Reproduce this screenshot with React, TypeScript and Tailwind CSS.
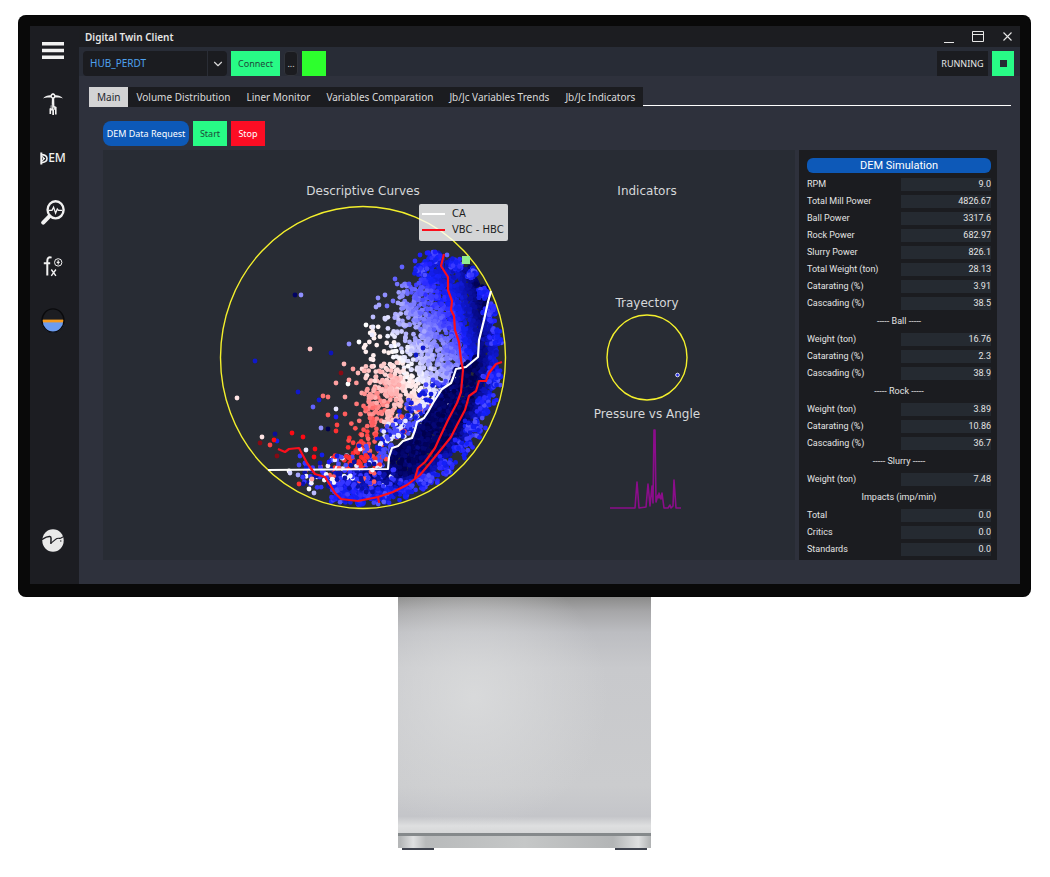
import { useMemo, useState } from 'react';
import type { ReactNode } from 'react';
import { ChevronDown } from 'lucide-react';

type Dot = { x: number; y: number; r: number; fill: string };
type Point = [number, number];
type Row = { label: string; value?: string };

const tabs = [
  'Main',
  'Volume Distribution',
  'Liner Monitor',
  'Variables Comparation',
  'Jb/Jc Variables Trends',
  'Jb/Jc Indicators',
];

// Rows without a value are section titles
const simulationRows: Row[] = [
  { label: 'RPM', value: '9.0' },
  { label: 'Total Mill Power', value: '4826.67' },
  { label: 'Ball Power', value: '3317.6' },
  { label: 'Rock Power', value: '682.97' },
  { label: 'Slurry Power', value: '826.1' },
  { label: 'Total Weight (ton)', value: '28.13' },
  { label: 'Catarating (%)', value: '3.91' },
  { label: 'Cascading (%)', value: '38.5' },
  { label: '----- Ball -----' },
  { label: 'Weight (ton)', value: '16.76' },
  { label: 'Catarating (%)', value: '2.3' },
  { label: 'Cascading (%)', value: '38.9' },
  { label: '----- Rock -----' },
  { label: 'Weight (ton)', value: '3.89' },
  { label: 'Catarating (%)', value: '10.86' },
  { label: 'Cascading (%)', value: '36.7' },
  { label: '----- Slurry -----' },
  { label: 'Weight (ton)', value: '7.48' },
  { label: 'Impacts (imp/min)' },
  { label: 'Total', value: '0.0' },
  { label: 'Critics', value: '0.0' },
  { label: 'Standards', value: '0.0' },
];

const CA_LINE =
  '491,291 488,302 484,320 479,340 478,357 466,367 456,369 453,378 451,383 442,389 433,403 428,412 424,418 417,422 415,430 412,438 403,441 398,446 392,448 389,457 388,469 268,470';
const VBC_LINE =
  '444,254 441,266 448,277 448,290 452,301 451,310 454,316 455,330 459,342 461,360 463,370 461,392 457,403 448,420 440,437 435,448 425,462 418,468 415,478';
const HBC_LINE =
  '502,362 496,364 489,373 486,381 479,381 476,391 469,396 465,410 457,425 451,437 443,447 430,463 420,475 407,485 393,492 378,497 379,502 378,497 358,501 341,499 335,493 325,477 315,474 307,463 299,448 289,449 285,452 278,449';
const PRESSURE_LINE =
  '610,508 635,508 637,482 639,508 646,507 648,484 650,506 652,486 653,503 654,430 655,430 656,502 658,495 659,498 659,493 661,499 662,493 664,508 668,508 670,505 671,508 673,506 674,480 676,508 681,508';

const bulkShape: Point[] = [
  [491, 291], [484, 320], [478, 355], [455, 369], [450, 384], [433, 403], [423, 419], [412, 439],
  [392, 449], [388, 469], [335, 473], [328, 482], [338, 497], [362, 502], [395, 495], [430, 474],
  [455, 450], [478, 420], [494, 388], [500, 350], [496, 318],
];
const fanShape: Point[] = [
  [427, 258], [437, 250], [445, 262], [455, 257], [463, 268], [473, 267], [478, 285], [490, 289],
  [487, 318], [479, 356], [455, 372], [443, 392], [425, 410], [405, 415], [394, 400], [378, 386],
  [366, 356], [362, 340], [372, 325], [384, 318], [398, 304], [394, 284], [404, 278], [414, 288],
  [417, 264],
];
// Lumps of balls carried up by the lifters
const lumps: Point[] = [
  [435, 257], [421, 270], [455, 264], [471, 274], [484, 293], [493, 312], [498, 338], [494, 378],
  [487, 405], [475, 427], [464, 449], [447, 467], [427, 480], [405, 491], [383, 497], [360, 499],
  [340, 495],
];
// [x, y, charge], from -1.5 (dark red) over 0 (white) to 2 (navy)
const strays: [number, number, number][] = [
  [295, 295, 1.9], [301, 295, 0.5], [310, 349, -0.25], [331, 353, 1.4], [349, 344, 0.5], [255, 361, 1.3],
  [237, 398, -0.1], [298, 392, 1.3], [313, 407, 0.7], [319, 400, 1.2], [323, 396, -0.6], [328, 397, -0.6],
  [344, 364, -0.3], [353, 369, -0.4], [358, 373, -0.3], [341, 373, -1.5], [336, 383, -0.4], [348, 384, 0],
  [349, 380, -0.4], [345, 397, -0.4], [336, 409, 0.1], [336, 417, 1], [328, 415, -0.7], [345, 414, -0.7],
  [321, 428, 0.5], [328, 429, 2], [337, 425, -0.8], [336, 431, -0.9], [262, 437, -0.1], [260, 443, -1.5],
  [270, 445, -0.8], [275, 434, 1.6], [277, 441, 1.1], [274, 440, -1], [292, 433, -1], [303, 437, -1],
  [277, 456, -1.5], [306, 450, 0.1], [315, 449, -1], [314, 457, -1], [322, 455, 1.1], [300, 456, 0.9],
  [315, 498, -0.1], [289, 471, 0], [290, 473, 0.2], [298, 475, 0.4], [299, 484, -0.9], [309, 489, 0],
  [314, 493, 0.3], [299, 465, 0.8], [306, 468, 1.3], [312, 479, -0.4], [320, 463, 1.4], [329, 462, 1],
  [337, 456, 1.2], [427, 253, 1], [420, 255, 1], [435, 252, 1], [402, 267, 0.7], [447, 255, 0.7],
  [415, 261, 0.9], [385, 295, 0.5], [378, 298, 0.5], [379, 305, 0.4], [376, 307, 0.4], [387, 306, 0.6],
  [393, 301, 0.6], [373, 317, 0.3], [366, 325, 0], [373, 327, 0.1], [359, 342, 0], [372, 335, 0.1],
  [395, 279, 0.7], [416, 355, 1.3], [423, 348, 1.3], [409, 284, 0.8], [430, 264, 1],
];

function createRandom(seed: number) {
  let s = seed;
  return () => {
    s = (s * 16807) % 2147483647;
    return s / 2147483647;
  };
}

function isInside(x: number, y: number, shape: Point[]) {
  let inside = false;
  for (let i = 0, j = shape.length - 1; i < shape.length; j = i++) {
    const [xi, yi] = shape[i];
    const [xj, yj] = shape[j];
    if (yi > y !== yj > y && x < ((xj - xi) * (y - yi)) / (yj - yi) + xi) inside = !inside;
  }
  return inside;
}

function shellRatio(x: number, y: number) {
  return Math.hypot((x - 363) / 142.5, (y - 357.5) / 151);
}

function chargeColor(c: number) {
  if (c > 1) {
    const k = Math.min(c - 1, 1);
    return `rgb(${Math.round(22 - 22 * k)},${Math.round(34 - 34 * k)},${Math.round(255 - 175 * k)})`;
  }
  if (c >= 0) {
    const v = Math.round(255 - 225 * c);
    return `rgb(${v},${v},255)`;
  }
  if (c > -1) {
    const v = Math.round(250 + 225 * c);
    return `rgb(255,${v},${v})`;
  }
  return `rgb(${Math.round(255 - Math.min(-c - 1, 0.5) * 240)},10,20)`;
}

function buildDots() {
  const rand = createRandom(4242);
  const dots: Dot[] = [];
  const add = (x: number, y: number, c: number) => {
    if (shellRatio(x, y) < 0.98) dots.push({ x, y, r: 2.4, fill: chargeColor(c) });
  };
  const spread = (n: number) => (rand() + rand() - 1) * n;

  // Falling fan, sparse on its left side
  for (let i = 0; i < 4600; i++) {
    const x = 355 + rand() * 140;
    const y = 248 + rand() * 168;
    if (!isInside(x, y, fanShape)) continue;
    const density = Math.min(1, Math.max(0.1, (x - 378) / 75));
    if (rand() > density) continue;
    let c = 0.7 + (x - 440) * 0.011 + (330 - y) * 0.008 + spread(0.14);
    if (x > 460) c += (x - 460) * 0.024;
    const floor = -0.05 - Math.max(0, y - 362) * 0.009;
    add(x, y, Math.max(floor, c));
  }

  // Pink to red column below the fan
  for (let i = 0; i < 165; i++) {
    const t = rand();
    const x = 382 - t * 22 + spread(23);
    const y = 365 + t * 95 + spread(10);
    add(x, y, -0.15 - t * 0.8 + spread(0.15));
  }
  for (let i = 0; i < 60; i++) {
    add(392 + spread(12), 375 + rand() * 48, -0.28 + spread(0.1));
  }

  // Mixed charge rolling down to the toe
  for (let i = 0; i < 230; i++) {
    const t = rand();
    const x = 445 - t * 72 + spread(17);
    const y = 385 + t * 74 + spread(15);
    const pick = rand();
    add(x, y, pick < 0.25 ? 0.1 : pick < 0.65 ? 0.8 : pick < 0.95 ? 1.2 : -0.8);
  }
  for (let i = 0; i < 85; i++) {
    const pick = rand();
    add(330 + rand() * 53, 455 + rand() * 16, pick < 0.35 ? -0.9 : pick < 0.65 ? 0.8 : pick < 0.8 ? 0.1 : 1.5);
  }

  // Dense cascading bulk, navy in the middle and brighter at the shell
  for (let i = 0; i < 8500; i++) {
    const x = 328 + rand() * 174;
    const y = 290 + rand() * 214;
    if (!isInside(x, y, bulkShape)) continue;
    const rho = shellRatio(x, y);
    if (rho > 0.94) continue;
    const shell = Math.max(0, (rho - 0.8) / 0.14);
    const toe = x < 395 ? (395 - x) / 55 : 0;
    add(x, y, Math.max(1, 1.9 - shell * 0.75 - toe * 0.5 + spread(0.25)));
  }

  // Lumps along the shell
  lumps.forEach(([cx, cy], index) => {
    const size = index < 5 ? 7 : 12;
    for (let i = 0; i < 42; i++) {
      add(cx + spread(size), cy + spread(size), 0.98 + spread(0.28));
    }
  });

  // Toe of the charge
  for (let i = 0; i < 130; i++) {
    const t = rand();
    const pick = rand();
    add(302 + t * 95, 476 + t * 6 + spread(15), pick < 0.14 ? 0.05 : pick < 0.22 ? -0.7 : pick < 0.7 ? 0.9 : 1.5);
  }

  strays.forEach(([x, y, c]) => add(x, y, c));
  return dots;
}

function DescriptiveCurves() {
  const dots = useMemo(buildDots, []);

  return (
    <figure className="relative w-[300px] shrink-0">
      <figcaption className="text-center text-xs leading-5 text-[#d6d8da] mb-0.5">Descriptive Curves</figcaption>
      <svg viewBox="213 203 300 310" className="block w-full" role="img" aria-label="Descriptive Curves">
        {dots.map((dot, i) => (
          <circle key={i} cx={dot.x} cy={dot.y} r={dot.r} fill={dot.fill} />
        ))}
        <ellipse cx="363" cy="357.5" rx="142.5" ry="151" fill="none" stroke="#f4f02c" strokeWidth="1.4" />
        <polyline points={CA_LINE} fill="none" stroke="#fff" strokeWidth="2.2" strokeLinejoin="round" />
        <polyline points={VBC_LINE} fill="none" stroke="#fb0f1c" strokeWidth="2.2" strokeLinejoin="round" />
        <polyline points={HBC_LINE} fill="none" stroke="#fb0f1c" strokeWidth="2.2" strokeLinejoin="round" />
        <rect x="462" y="256" width="8" height="8" fill="#90ee90" />
      </svg>
      <ul className="absolute right-[5px] top-[23px] w-[89px] h-[37px] rounded-xs bg-white/80 px-[3px] py-0.5 text-[10px] leading-4 text-[#1d1d1d]">
        <li className="flex items-center">
          <span className="w-[23px] h-0.5 mr-[7px] bg-white" />CA
        </li>
        <li className="flex items-center whitespace-nowrap">
          <span className="w-[23px] h-0.5 mr-[7px] bg-[#fb0f1c]" />VBC - HBC
        </li>
      </ul>
    </figure>
  );
}

function Indicators() {
  return (
    <div className="w-[120px] shrink-0 text-center text-xs leading-5 text-[#d6d8da]">
      <h2 className="mb-[92px]">Indicators</h2>
      <h3>Trayectory</h3>
      <svg viewBox="602 313 90 90" className="mx-auto block w-[90px]" role="img" aria-label="Trayectory">
        <ellipse cx="647" cy="357.5" rx="40" ry="42.5" fill="none" stroke="#f4f02c" strokeWidth="1.4" />
        <circle cx="677.5" cy="375" r="1.8" fill="#1c28e8" stroke="#e8e8ff" strokeWidth="1" />
      </svg>
      <h3 className="mt-px mb-1 whitespace-nowrap">Pressure vs Angle</h3>
      <svg viewBox="607 428 80 84" className="mx-auto block w-20" role="img" aria-label="Pressure vs Angle">
        <polyline points={PRESSURE_LINE} fill="none" stroke="#8b0d8b" strokeWidth="1.6" strokeLinejoin="round" />
      </svg>
    </div>
  );
}

function SimulationPanel() {
  return (
    <aside className="w-[198px] shrink-0 bg-[#1b1c20] pl-2 pr-1.5 pt-2 pb-0.5 font-['Roboto','Noto_Sans',sans-serif]">
      <h2 className="mb-[3px] h-[15px] rounded-md bg-[#0d59b8] text-center text-[11px] leading-[15px] text-white">DEM Simulation</h2>
      <table className="w-full text-[9px] leading-[13px] text-[#e4e4e4]">
        <tbody>
          {simulationRows.map((row, i) =>
            row.value ? (
              <tr key={i} className="h-[17px]">
                <th scope="row" className="p-0 text-left font-normal whitespace-nowrap">{row.label}</th>
                <td className="w-[90px] p-0">
                  <div className="h-[13px] bg-[#252a31] text-right">{row.value}</div>
                </td>
              </tr>
            ) : (
              <tr key={i} className="h-[19px]">
                <th colSpan={2} className="p-0 text-center font-normal">{row.label}</th>
              </tr>
            )
          )}
        </tbody>
      </table>
    </aside>
  );
}

function NavButton({ label, children }: { label: string; children: ReactNode }) {
  return (
    <button type="button" aria-label={label} className="flex h-8 w-8 items-center justify-center">
      {children}
    </button>
  );
}

function Sidebar() {
  return (
    <nav className="flex w-[49px] shrink-0 flex-col items-center gap-[22px] bg-[#1c1d22] pt-2 pb-7 pr-[3px] text-[#f1f1f1]">
      <NavButton label="Menu">
        <svg viewBox="0 0 22 17" className="w-[22px]" fill="currentColor">
          <path d="M0 0h22v3.5H0zM0 6.7h22v3.5H0zM0 13.4h22v3.5H0z" />
        </svg>
      </NavButton>
      <NavButton label="Mill">
        <svg viewBox="0 0 20 22" className="w-5" fill="currentColor">
          <path d="M0 5.6C2 2.6 5 2.2 7.6 2.3 8 .8 9 .3 10 .3s2 .5 2.4 2c2.600-.1 5.600.3 7.600 3.300-2.200-1.100-4.600-1.100-7.800-1-.3.6-.7.9-1 1l.2 7.400 2.200 1v7.400h-1.600v-4.600h-1v5.200H9.300v-4.400H8.100v3.300H6.500v-5.400l1.200-.4v-2.600l1-.6.200-6.300c-.4-.2-.8-.5-1-1C4.600 4.500 2.200 4.500 0 5.600z" />
          <circle cx="10" cy="3.200" r="1.100" fill="#1c1d22" />
          <path d="M8.700 11.500v4M10.700 14.500v2" stroke="#1c1d22" strokeWidth=".6" />
        </svg>
      </NavButton>
      <NavButton label="DEM">
        <span className="flex items-center text-[12px] leading-4 font-medium">
          <svg viewBox="0 0 8 13" className="w-2 h-[13px]" fill="none" stroke="currentColor">
            <path d="M1.300.5v12" strokeWidth="2" />
            <path d="M1 2.600c4 0 6 1.500 6 4s-2 4-6 4" strokeWidth="1.600" />
            <path d="M2 4.500l2 1.300M2 8.700l2-1.300M3 6.600h2" strokeWidth="1.100" />
          </svg>
          EM
        </span>
      </NavButton>
      <NavButton label="Analysis">
        <svg viewBox="0 0 24 25" className="w-6" fill="none" stroke="currentColor">
          <ellipse cx="14.600" cy="9.800" rx="8" ry="8.600" strokeWidth="2.400" />
          <path d="M8.300 16.300L2.200 22.600" strokeWidth="4" strokeLinecap="round" />
          <path d="M8 10.300h3l1.600-3.200 2 6 1.700-4.200 1.200 1.400h3.600" strokeWidth="1.300" />
        </svg>
      </NavButton>
      <NavButton label="Functions">
        <svg viewBox="0 0 20 21" className="w-5" fill="none" stroke="currentColor">
          <path d="M8.600 1.600C5.300.7 4.300 2.300 4.300 5v14.500M.8 7.300h6.400" strokeWidth="2" />
          <path d="M8.300 13.500l4.600 6.300M12.900 13.500l-4.600 6.300" strokeWidth="1.400" />
          <circle cx="15.200" cy="6.400" r="3.700" strokeWidth="1" />
          <path d="M15.200 4.200v4.400M13.700 6.400h3" strokeWidth="1.100" />
        </svg>
      </NavButton>
      <NavButton label="Level">
        <svg viewBox="0 0 24 25" className="w-6">
          <path d="M1 13.500a11 11 0 0 0 22 0z" fill="#6c9cf0" />
          <path d="M1 11.600h22v2.800H1z" fill="#f59a1d" />
          <ellipse cx="12" cy="12.500" rx="11" ry="11.700" fill="none" stroke="#0a0a0c" strokeWidth="1.300" />
        </svg>
      </NavButton>
      <div className="mt-auto">
        <NavButton label="About">
          <svg viewBox="0 0 22 23" className="w-[22px]" fill="none" stroke="#1c1d22" strokeLinecap="round" strokeLinejoin="round">
            <ellipse cx="11" cy="11.500" rx="10.700" ry="11.300" fill="#e9e9e9" stroke="none" />
            <path d="M.6 10.200C3 8.600 5.600 7.400 7.800 7.600c1.600.2 1.300 1.400 1.200 2.800L8.900 14.200" strokeWidth="1.500" />
            <path d="M8.900 14.200c2-1.200 3.800-3.600 6-4.600 1.600-.6 2.600 0 3.600-.4.900-.3 1.500-.7 2.200-1.200" strokeWidth="1.100" />
            <circle cx="18.800" cy="12" r=".7" fill="#1c1d22" stroke="none" />
          </svg>
        </NavButton>
      </div>
    </nav>
  );
}

function TitleBar() {
  return (
    <header className="flex h-[21px] items-center justify-between bg-[#1c1d21] pl-1.5 pr-[7px] text-[#e6e6e6]">
      <h1 className="text-[10px] leading-4 font-semibold">Digital Twin Client</h1>
      <div className="flex items-center gap-[17px]">
        <button type="button" aria-label="Minimize" className="flex h-3 w-3 items-end justify-center">
          <span className="h-px w-2.5 bg-current" />
        </button>
        <button type="button" aria-label="Maximize">
          <svg viewBox="0 0 12 11" className="block w-3" fill="none" stroke="currentColor">
            <path d="M.5.5h11v10H.5zM.5 3.500h11" />
          </svg>
        </button>
        <button type="button" aria-label="Close" className="flex w-3 justify-center">
          <svg viewBox="0 0 9 9" className="block w-[9px]" fill="none" stroke="currentColor" strokeWidth="1.100">
            <path d="M.5.5l8 8M8.500.5l-8 8" />
          </svg>
        </button>
      </div>
    </header>
  );
}

function Toolbar() {
  return (
    <div className="flex h-[29px] items-end gap-1 bg-[#282c36] pl-1 pr-1.5 text-[10px]">
      <div className="relative h-[25px] w-36">
        <select aria-label="Hub" className="h-full w-full appearance-none rounded-sm bg-[#1b1c20] pl-[7px] text-[#4ea1ee] outline-none">
          <option>HUB_PERDT</option>
        </select>
        <span className="pointer-events-none absolute inset-y-0 right-0 flex w-5 items-center justify-center border-l border-[#2a2d35] text-[#d8d8d8]">
          <ChevronDown className="h-3.5 w-3.5" />
        </span>
      </div>
      <button type="button" className="h-[25px] w-[49px] bg-[#28fb86] text-[9px] text-[#1c4a38]">Connect</button>
      <button type="button" aria-label="More" className="h-[25px] w-[14px] rounded-sm border border-[#30333a] bg-[#1b1c20] text-[9px] text-[#d8d8d8]">...</button>
      <span className="h-[25px] w-6 bg-[#2dff2d]" />
      <span className="ml-auto h-[25px] w-[51px] bg-[#1b1c20] text-center text-[9px] leading-[26px] text-[#e6e6e6]">RUNNING</span>
      <button type="button" aria-label="Stop client" className="flex h-[25px] w-[22px] items-center justify-center bg-[#28fb86]">
        <span className="h-[7px] w-[7px] bg-[#262b33]" />
      </button>
    </div>
  );
}

export default function App() {
  const [activeTab, setActiveTab] = useState('Main');

  return (
    <div className="min-h-screen bg-white pl-[18px] pr-[19px] pt-[15px] font-['Noto_Sans','Open_Sans',sans-serif]">
      <div className="flex rounded-lg bg-[#090909] pl-3 pr-[11px] pt-[11px] pb-[13px] ring-1 ring-black/30 ring-inset">
        <Sidebar />
        <div className="flex min-w-0 flex-1 flex-col bg-[#2e313c]">
          <TitleBar />
          <Toolbar />
          <div className="flex pl-2.5 pr-[9px] pt-[11px]">
            <div role="tablist" className="flex bg-[#1b1c20] text-[10px] leading-5">
              {tabs.map((tab) => (
                <button
                  key={tab}
                  type="button"
                  role="tab"
                  aria-selected={activeTab === tab}
                  onClick={() => setActiveTab(tab)}
                  className={`px-2 whitespace-nowrap ${activeTab === tab ? 'bg-[#d3d3d4] text-[#23262e]' : 'text-[#dadada]'}`}
                >
                  {tab}
                </button>
              ))}
            </div>
            <div className="mb-px flex-1 border-b border-white" />
          </div>
          <main className="px-6 pb-6 pt-[14px] pr-[23px]">
            <div className="mb-1 flex gap-1 text-[10px] leading-[25px] text-white">
              <button type="button" className="w-[86px] whitespace-nowrap rounded-lg bg-[#0d59b8] text-[9px]">DEM Data Request</button>
              <button type="button" className="w-[34px] bg-[#28fb86] text-[9px] text-[#1c4a38]">Start</button>
              <button type="button" className="w-[34px] bg-[#fd0d24] text-[9px]">Stop</button>
            </div>
            <div className="flex gap-1">
              <section className="flex min-w-0 flex-1 justify-between bg-[#282c34] pl-[110px] pr-[88px] pt-[31px] font-['DejaVu_Sans',sans-serif]">
                <DescriptiveCurves />
                <Indicators />
              </section>
              <SimulationPanel />
            </div>
          </main>
        </div>
      </div>

      <div className="mx-auto w-[253px]">
        <div className="h-[236px] bg-[radial-gradient(circle_at_30%_42%,rgba(218,219,220,0.9),rgba(200,201,204,0)_60%),linear-gradient(to_bottom,#8b8b8a_0%,#a6a6a8_6%,#bcbdc1_15%,#c8c9cc_30%,#cbccce_80%,#c4c5c9_93%,#dedfe0_97%,#d6d7d8_100%)]" />
        <div className="h-[3px] bg-[#85898b]" />
        <div className="h-3 bg-[linear-gradient(to_right,#b5b7b8_1%,#dfe0e1_6%,#b8babb_11%,#c5c7c7_50%,#b3b5b6_85%,#dedfe0_95%,#b0b2b3_100%)]" />
        <div className="flex justify-between px-1">
          <span className="h-0.5 w-8 bg-[#40444f]" />
          <span className="h-0.5 w-8 bg-[#40444f]" />
        </div>
      </div>
    </div>
  );
}
